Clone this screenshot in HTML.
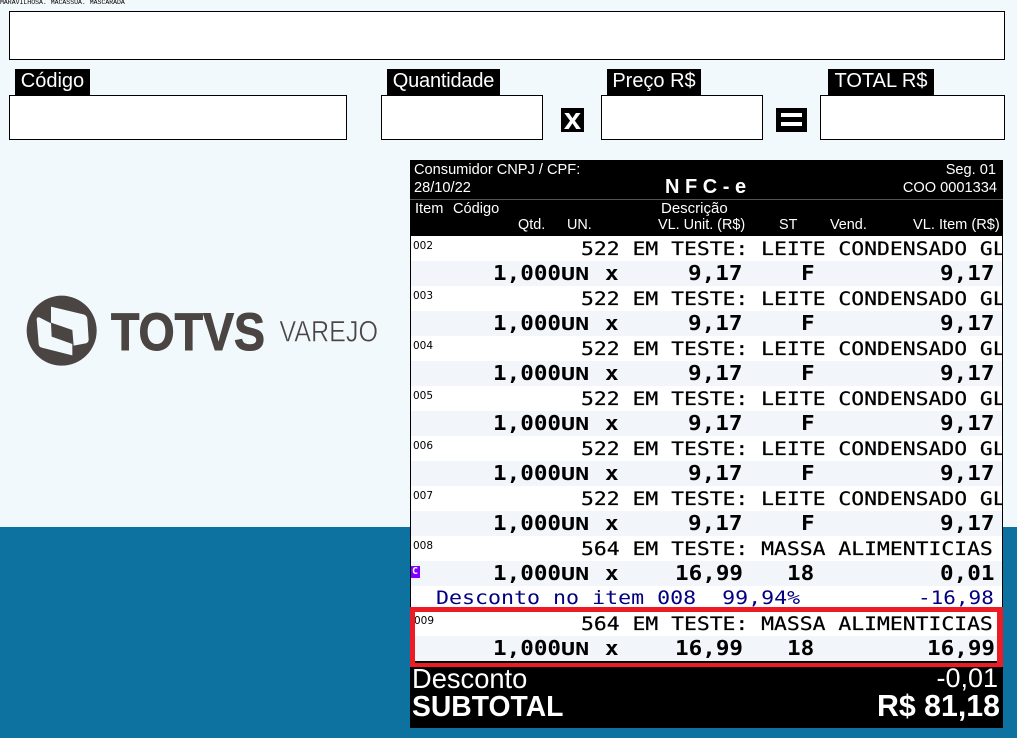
<!DOCTYPE html>
<html><head><meta charset="utf-8">
<style>
html,body{margin:0;padding:0}
body{width:1017px;height:738px;position:relative;overflow:hidden;background:#f2f9fc;font-family:"Liberation Sans",sans-serif}
div,span{position:absolute;white-space:pre}
.box{background:#fff;border:1px solid #000;box-sizing:border-box}
.lab{background:#000;color:#fff;font-size:20px;line-height:25px;height:26px;top:69px;text-align:center}
.h{color:#fff;font-size:14.6px;line-height:16px}
.h2{color:#fff;font-size:14.4px;line-height:16px}
.row{left:1px;width:591px;height:50px;overflow:hidden;background:#fff}
.row .t{left:0;top:25px;width:591px;height:25px;background:#f2f6fb}
.m{font-family:"DejaVu Sans Mono",monospace;color:#000;line-height:25px;transform-origin:0 50%}
.d{font-size:19px;transform:scaleX(1.125);top:1px;left:170px;-webkit-text-stroke:.25px #000}
.n{font-size:20px;font-weight:bold;transform:scaleX(1.13);top:25px}
.u{font-size:18px;font-weight:bold;top:25.5px;left:150px;transform:scaleX(1.3)}
.i{font-family:"DejaVu Sans",sans-serif;font-size:10.5px;line-height:12px;left:2px;top:4px;color:#000}
</style></head><body>
<div style="left:0;top:527px;width:1017px;height:211px;background:#0e72a0"></div>
<div style="left:0;top:-1px;font-family:'Liberation Mono',monospace;font-size:6.5px;line-height:8px;color:#000">MARAVILHOSA. MACASSUA. MASCARADA</div>

<div class="box" style="left:9px;top:11px;width:996px;height:49px"></div>
<div class="lab" style="left:15px;width:75px">Código</div>
<div class="box" style="left:9px;top:95px;width:338px;height:45px"></div>
<div class="lab" style="left:387px;width:113px;letter-spacing:-.2px">Quantidade</div>
<div class="box" style="left:381px;top:95px;width:162px;height:45px"></div>
<div class="lab" style="left:607px;width:94px">Preço R$</div>
<div class="box" style="left:601px;top:95px;width:162px;height:45px"></div>
<div class="lab" style="left:828px;width:106px">TOTAL R$</div>
<div class="box" style="left:820px;top:95px;width:185px;height:45px"></div>
<div style="left:561px;top:108px;width:23px;height:24px;background:#000;color:#fff;font-weight:bold;font-size:31px;line-height:22px;text-align:center">x</div>
<div style="left:776px;top:108px;width:31px;height:24px;background:#000">
  <div style="left:5px;top:5px;width:21px;height:4px;background:#fff"></div>
  <div style="left:5px;top:14px;width:21px;height:4px;background:#fff"></div>
</div>

<svg style="position:absolute;left:15px;top:280px" width="380" height="100" viewBox="0 0 1140 300">
  <circle cx="140" cy="152" r="105" fill="#4a4543"/>
  <path d="M108 80 L205 103 Q216 106 217 117 L221 178 Q221 188 212 190 L176 197 L172 150 L108 128 Z" fill="#f2f9fc"/>
  <path d="M65 118 Q65 110 73 112 L108 130 L110 170 L172 192 L172 226 L80 203 Q72 201 71 192 Z" fill="#f2f9fc"/>
  <text x="288" y="210" font-family="Liberation Sans" font-weight="bold" font-size="158" fill="#4a4543" stroke="#4a4543" stroke-width="3" textLength="462" lengthAdjust="spacingAndGlyphs">TOTVS</text>
  <text x="793" y="184" font-family="Liberation Sans" font-size="88" fill="#4a4543" stroke="#f2f9fc" stroke-width="1.5" textLength="296" lengthAdjust="spacingAndGlyphs">VAREJO</text>
</svg>

<div style="left:410px;top:160px;width:593px;height:568px;background:#000;overflow:hidden">
  <div class="h" style="left:4px;top:2px">Consumidor CNPJ / CPF:</div>
  <div class="h" style="left:4px;top:20px">28/10/22</div>
  <div style="left:255px;top:17px;color:#fff;font-weight:bold;font-size:20px;line-height:21px">N F C - e</div>
  <div class="h" style="right:7px;top:2px">Seg. 01</div>
  <div class="h" style="right:6px;top:20px">COO 0001334</div>
  <div style="left:0;top:39px;width:593px;height:1px;background:#555"></div>
  <div class="h" style="left:5px;top:41px">Item</div>
  <div class="h" style="left:43px;top:41px">Código</div>
  <div class="h" style="left:251px;top:41px;font-size:15px">Descrição</div>
  <div class="h2" style="left:108px;top:57px">Qtd.</div>
  <div class="h2" style="left:157px;top:57px">UN.</div>
  <div class="h2" style="left:248px;top:57px">VL. Unit. (R$)</div>
  <div class="h2" style="left:369px;top:57px">ST</div>
  <div class="h2" style="left:420px;top:57px">Vend.</div>
  <div class="h2" style="left:503px;top:57px;font-size:14.6px">VL. Item (R$)</div>

  <div class="row" style="top:76px"><div class="t"></div><span class="i">002</span><span class="m d">522 EM TESTE: LEITE CONDENSADO GLUTEN</span><span class="m n" style="left:82px">1,000</span><span class="m u">UN</span><span class="m n" style="left:194px">x</span><span class="m n" style="left:277px">9,17</span><span class="m n" style="left:390px">F</span><span class="m n" style="left:529px">9,17</span></div>
  <div class="row" style="top:126px"><div class="t"></div><span class="i">003</span><span class="m d">522 EM TESTE: LEITE CONDENSADO GLUTEN</span><span class="m n" style="left:82px">1,000</span><span class="m u">UN</span><span class="m n" style="left:194px">x</span><span class="m n" style="left:277px">9,17</span><span class="m n" style="left:390px">F</span><span class="m n" style="left:529px">9,17</span></div>
  <div class="row" style="top:176px"><div class="t"></div><span class="i">004</span><span class="m d">522 EM TESTE: LEITE CONDENSADO GLUTEN</span><span class="m n" style="left:82px">1,000</span><span class="m u">UN</span><span class="m n" style="left:194px">x</span><span class="m n" style="left:277px">9,17</span><span class="m n" style="left:390px">F</span><span class="m n" style="left:529px">9,17</span></div>
  <div class="row" style="top:226px"><div class="t"></div><span class="i">005</span><span class="m d">522 EM TESTE: LEITE CONDENSADO GLUTEN</span><span class="m n" style="left:82px">1,000</span><span class="m u">UN</span><span class="m n" style="left:194px">x</span><span class="m n" style="left:277px">9,17</span><span class="m n" style="left:390px">F</span><span class="m n" style="left:529px">9,17</span></div>
  <div class="row" style="top:276px"><div class="t"></div><span class="i">006</span><span class="m d">522 EM TESTE: LEITE CONDENSADO GLUTEN</span><span class="m n" style="left:82px">1,000</span><span class="m u">UN</span><span class="m n" style="left:194px">x</span><span class="m n" style="left:277px">9,17</span><span class="m n" style="left:390px">F</span><span class="m n" style="left:529px">9,17</span></div>
  <div class="row" style="top:326px"><div class="t"></div><span class="i">007</span><span class="m d">522 EM TESTE: LEITE CONDENSADO GLUTEN</span><span class="m n" style="left:82px">1,000</span><span class="m u">UN</span><span class="m n" style="left:194px">x</span><span class="m n" style="left:277px">9,17</span><span class="m n" style="left:390px">F</span><span class="m n" style="left:529px">9,17</span></div>
  <div class="row" style="top:376px"><div class="t"></div><span class="i">008</span><span class="m d">564 EM TESTE: MASSA ALIMENTICIAS</span><span class="m n" style="left:82px">1,000</span><span class="m u">UN</span><span class="m n" style="left:194px">x</span><span class="m n" style="left:264px">16,99</span><span class="m n" style="left:376px">18</span><span class="m n" style="left:529px">0,01</span>
    <div style="left:-1px;top:30px;width:10px;height:12px;background:#8000ff;color:#fff;font-family:'DejaVu Sans Mono',monospace;font-weight:bold;font-size:10px;line-height:12px;text-align:center">C</div></div>
  <div style="left:1px;top:426px;width:591px;height:25px;background:#fff;overflow:hidden"><span class="m" style="left:25px;top:0;font-size:19px;transform:scaleX(1.137);color:#000080">Desconto no item 008  99,94%</span><span class="m" style="left:507px;top:0;font-size:19px;transform:scaleX(1.105);color:#000080">-16,98</span></div>
  <div class="row" style="top:451px"><div class="t"></div><span class="i" style="left:3px">009</span><span class="m d">564 EM TESTE: MASSA ALIMENTICIAS</span><span class="m n" style="left:82px">1,000</span><span class="m u">UN</span><span class="m n" style="left:194px">x</span><span class="m n" style="left:264px">16,99</span><span class="m n" style="left:376px">18</span><span class="m n" style="left:516px">16,99</span></div>
  <div style="left:0;top:447px;width:593px;height:60px;box-sizing:border-box;border:solid #ed1c24;border-width:5px 6px 4px 5px"></div>

  <div style="left:2px;top:503px;color:#fff;font-size:27.3px;line-height:31px">Desconto</div>
  <div style="right:5px;top:503px;color:#fff;font-size:27px;line-height:31px">-0,01</div>
  <div style="left:2px;top:530px;color:#fff;font-size:28.3px;font-weight:bold;line-height:33px">SUBTOTAL</div>
  <div style="right:3px;top:530px;color:#fff;font-size:30.3px;font-weight:bold;line-height:33px">R$ 81,18</div>
</div>
</body></html>
